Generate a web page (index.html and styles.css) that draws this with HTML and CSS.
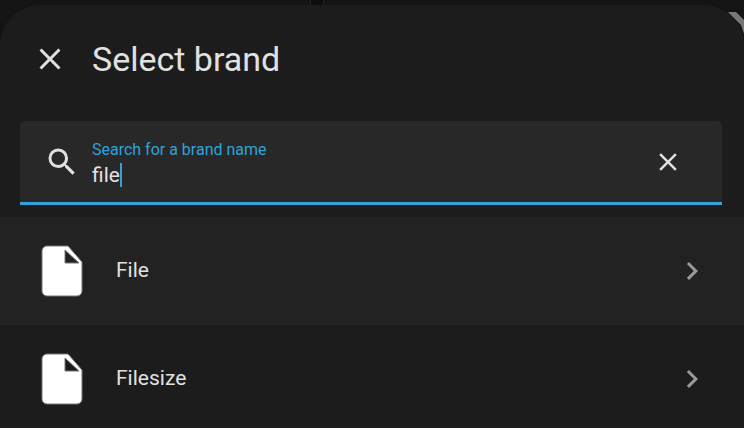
FILE: index.html
```html
<!DOCTYPE html>
<html lang="en">
<head>
  <meta charset="UTF-8">
  <meta name="viewport" content="width=device-width, initial-scale=1">
  <title>Select brand</title>
  <link rel="stylesheet" href="styles.css">
</head>
<body>
  <div class="backdrop" aria-hidden="true">
    <div class="card"></div>
    <div class="card">
      <svg class="chart-line" viewBox="0 0 16 40"><path d="M0 12h8l8 8v14l-3-9-7-7z"/></svg>
    </div>
  </div>

  <main class="dialog" role="dialog" aria-labelledby="dialogTitle">
    <header class="dialog-header">
      <button class="icon-btn" type="button" aria-label="Close">
        <svg class="icon" viewBox="0 0 24 24"><path d="M19 6.41 17.59 5 12 10.59 6.41 5 5 6.41 10.59 12 5 17.59 6.41 19 12 13.41 17.59 19 19 17.59 13.41 12z"/></svg>
      </button>
      <h1 id="dialogTitle">Select brand</h1>
    </header>

    <div class="search">
      <svg class="icon" viewBox="0 0 24 24"><path d="M9.5 3A6.5 6.5 0 0 1 16 9.5c0 1.61-.59 3.09-1.56 4.23l.27.27h.79l5 5-1.5 1.5-5-5v-.79l-.27-.27A6.516 6.516 0 0 1 9.5 16a6.5 6.5 0 0 1 0-13m0 2C7 5 5 7 5 9.5S7 14 9.5 14 14 12 14 9.5 12 5 9.5 5"/></svg>
      <div class="search-text">
        <label for="searchInput">Search for a brand name</label>
        <div class="search-value">
          <input type="text" id="searchInput" value="file" size="3" autocomplete="off" spellcheck="false">
          <span class="caret"></span>
        </div>
      </div>
      <button class="icon-btn" id="clearBtn" type="button" aria-label="Clear">
        <svg class="icon icon-small" viewBox="0 0 24 24"><path d="M19 6.41 17.59 5 12 10.59 6.41 5 5 6.41 10.59 12 5 17.59 6.41 19 12 13.41 17.59 19 19 17.59 13.41 12z"/></svg>
      </button>
    </div>

    <div class="brands">
      <button class="brand active" type="button">
        <svg class="brand-icon" viewBox="0 0 42 52"><path d="M6 1h21l14 16v29a5 5 0 0 1-5 5H6a5 5 0 0 1-5-5V6a5 5 0 0 1 5-5zm18 4v13h14z"/></svg>
        <span class="brand-name">File</span>
        <svg class="icon chevron" viewBox="0 0 24 24"><path d="M8.59 16.58 13.17 12 8.59 7.41 10 6l6 6-6 6z"/></svg>
      </button>
      <button class="brand" type="button">
        <svg class="brand-icon" viewBox="0 0 42 52"><path d="M6 1h21l14 16v29a5 5 0 0 1-5 5H6a5 5 0 0 1-5-5V6a5 5 0 0 1 5-5zm18 4v13h14z"/></svg>
        <span class="brand-name">Filesize</span>
        <svg class="icon chevron" viewBox="0 0 24 24"><path d="M8.59 16.58 13.17 12 8.59 7.41 10 6l6 6-6 6z"/></svg>
      </button>
    </div>
  </main>

  <script>
    document.getElementById('clearBtn').onclick = () => {
      const input = document.getElementById('searchInput');
      input.value = '';
      input.focus();
    };
  </script>
</body>
</html>
```
FILE: styles.css
```css
* {
  box-sizing: border-box;
}

body {
  margin: 0;
  height: 100vh;
  overflow: hidden;
  padding-top: 5px;
  display: flex;
  flex-direction: column;
  font-family: Roboto, sans-serif;
  background: #0d0d0d;
  color: #e1e1e1;
}

/* page behind the dialog */
.backdrop {
  position: absolute;
  inset: 0;
  display: grid;
  grid-template-columns: 311px 1fr;
  gap: 12px;
}

.card {
  display: flex;
  justify-content: flex-end;
  align-items: flex-start;
  background: #141414;
  border-right: 1px solid #242424;
}

.card + .card {
  border-right: none;
  border-left: 1px solid #242424;
}

.chart-line {
  width: 16px;
  height: 40px;
  fill: #777;
}

.dialog {
  position: relative;
  flex: 1 0 auto;
  background: #1c1c1c;
  border-radius: 40px 40px 0 0;
}

.dialog-header {
  display: flex;
  align-items: center;
  gap: 24px;
  padding: 30px 32px 38px;
}

h1 {
  margin: 0;
  font-size: 34px;
  line-height: 48px;
  font-weight: 400;
}

.icon-btn {
  display: flex;
  padding: 0;
  border: none;
  background: none;
  color: inherit;
  cursor: pointer;
}

.icon {
  width: 36px;
  height: 36px;
  flex: none;
  fill: currentColor;
}

.icon-small {
  width: 30px;
  height: 30px;
}

.search {
  display: flex;
  align-items: center;
  gap: 12px;
  margin: 0 22px 12px 20px;
  padding: 16px 39px 15px 24px;
  background: #282828;
  border-bottom: 3px solid #2ea3dc;
  border-radius: 5px 5px 0 0;
}

.search-text {
  flex: 1;
}

.search-text label {
  display: block;
  font-size: 16px;
  line-height: 26px;
  color: #2ea3dc;
}

.search-value {
  display: flex;
  align-items: center;
}

.search-value input {
  field-sizing: content;
  height: 24px;
  padding: 0;
  border: none;
  outline: none;
  background: none;
  font: 21px/24px Roboto, sans-serif;
  color: inherit;
  caret-color: transparent;
}

.caret {
  width: 2px;
  height: 24px;
  background: #2ea3dc;
}

.brand {
  display: flex;
  align-items: center;
  width: 100%;
  height: 108px;
  padding: 0 34px 0 41px;
  border: none;
  background: none;
  font: 21px/28px Roboto, sans-serif;
  color: inherit;
  text-align: left;
  cursor: pointer;
}

.brand.active {
  background: #222;
}

.brand-icon {
  width: 42px;
  height: 52px;
  flex: none;
  fill: #fff;
  stroke: #777;
  stroke-width: 1;
}

.brand-name {
  flex: 1;
  padding: 0 0 2px 33px;
}

.chevron {
  color: #999;
}
```
